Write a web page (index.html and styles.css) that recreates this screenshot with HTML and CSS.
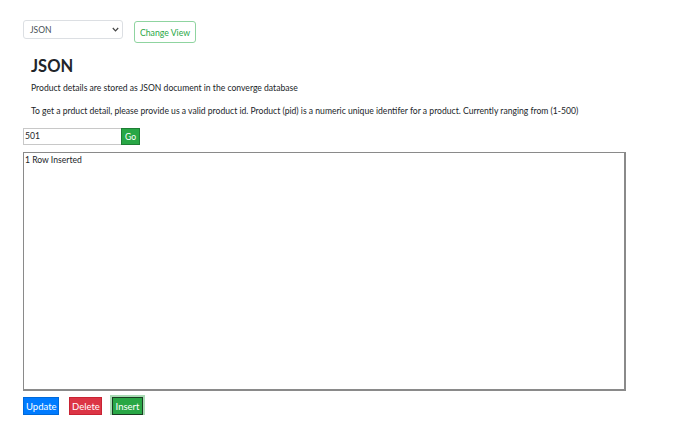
FILE: index.html
```html
<!DOCTYPE html>
<html>
<head>
<meta charset="utf-8">
<link rel="stylesheet" href="styles.css">
</head>
<body>
<div class="page">
  <div class="toolbar">
    <div class="select">
      <span>JSON</span>
      <svg class="chev" width="7" height="5" viewBox="0 0 7 5"><path d="M0.8 1 L3.5 3.8 L6.2 1" fill="none" stroke="#444" stroke-width="1.2"/></svg>
    </div>
    <button class="btn-outline">Change View</button>
  </div>
  <div class="content">
    <h1>JSON</h1>
    <p>Product details are stored as JSON document in the converge database</p>
    <p>To get a prduct detail, please provide us a valid product id. Product (pid) is a numeric unique identifer for a product. Currently ranging from (1-500)</p>
  </div>
  <div class="search">
    <div class="input">501</div>
    <button class="go">Go</button>
  </div>
  <div class="output">1 Row Inserted</div>
  <div class="actions">
    <button class="btn blue">Update</button>
    <button class="btn red">Delete</button>
    <button class="btn green focus">Insert</button>
  </div>
</div>
</body>
</html>
```
FILE: styles.css
```css
* { box-sizing: border-box; }
html, body { margin: 0; padding: 0; background: #fff; }
body { font-family: "Lato", "Open Sans", sans-serif; color: #212529; }
.page { padding: 20px 0 0 23px; }
.toolbar { display: flex; align-items: flex-start; gap: 11px; }
.select {
  width: 100px; height: 19px; border: 1px solid #dcdfe3; border-radius: 3px;
  display: flex; align-items: center; justify-content: space-between;
  padding: 0 3px 0 6px; font-size: 8.5px; color: #495057;
}
.btn-outline {
  margin-top: 1px; height: 22px; width: 62px; padding: 0;
  border: 1px solid #8fd4a0; border-radius: 3px; background: #fff;
  color: #28a745; font-family: inherit; font-size: 8.7px;
}
.content { padding-left: 8px; }
h1 { margin: 12px 0 0; font-family: "Lato", sans-serif; font-size: 16.5px; font-weight: 700; line-height: 22px; color: #212529; }
p { margin: 5px 0 0; font-size: 8.6px; line-height: 12px; color: #212529; }
p + p { margin-top: 11px; }
.search { display: flex; margin-top: 11px; }
.input {
  width: 98px; height: 17px; border: 1px solid #c8c8c8; border-right: none;
  font-size: 8.6px; line-height: 15px; padding-left: 1px; color: #212529;
}
.go {
  width: 19px; height: 17px; padding: 0; border: 1px solid #1e7e34;
  background: #28a745; color: #fff; font-family: inherit; font-size: 8.6px;
}
.output {
  margin-top: 7px; width: 603px; height: 239px; border: 1px solid #8a8a8a;
  border-width: 1px 2px 2px 1px;
  font-size: 8.6px; line-height: 13px; padding-left: 1px; padding-top: 1px; color: #212529;
}
.actions { display: flex; margin-top: 6px; gap: 10px; }
.btn {
  height: 18px; padding: 0 2px; border: 1px solid transparent; border-radius: 0;
  color: #fff; font-family: inherit; font-size: 9.5px;
}
.blue { background: #007bff; border-color: #0069d9; width: 36px; }
.red { background: #dc3545; border-color: #c82333; width: 33px; }
.green { background: #28a745; width: 31px; }
.focus { border: 1px solid #1a3d22; box-shadow: 0 0 0 2px #a8dcb4; margin-left: 0; }
```
